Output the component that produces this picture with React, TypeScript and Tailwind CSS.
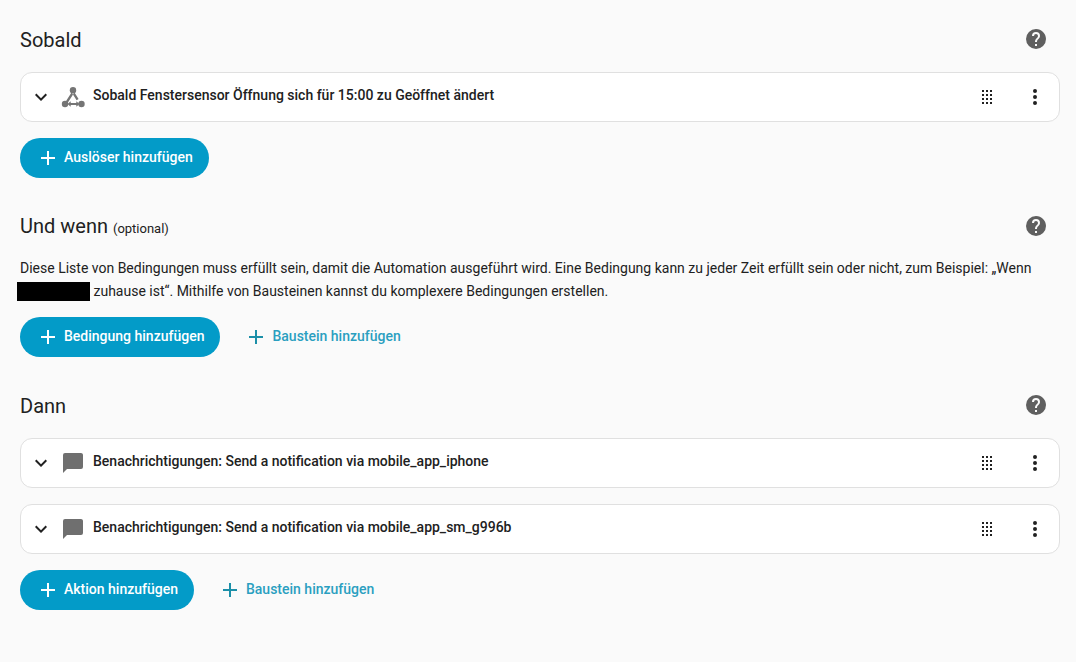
const F = "font-['Roboto',sans-serif]";

function Plus({ className }: { className: string }) {
  return (
    <svg viewBox="0 0 24 24" className={className} fill="currentColor">
      <path d="M19 13h-6v6h-2v-6H5v-2h6V5h2v6h6v2z" />
    </svg>
  );
}

function Help() {
  return (
    <svg viewBox="0 0 24 24" className="w-6 h-6 text-[#5f5f5f]" fill="currentColor">
      <path d="M15.07,11.25L14.17,12.17C13.45,12.89 13,13.5 13,15H11V14.5C11,13.39 11.45,12.39 12.17,11.67L13.41,10.41C13.78,10.05 14,9.55 14,9C14,7.89 13.1,7 12,7A2,2 0 0,0 10,9H8A4,4 0 0,1 12,5A4,4 0 0,1 16,9C16,9.88 15.64,10.67 15.07,11.25M13,19H11V17H13M12,2A10,10 0 0,0 2,12A10,10 0 0,0 12,22A10,10 0 0,0 22,12C22,6.47 17.5,2 12,2Z" />
    </svg>
  );
}

function Trigger() {
  return (
    <svg viewBox="0 0 24 24" className="w-6 h-6 text-[#757575]" fill="currentColor">
      <circle cx="12" cy="5.2" r="3.2" />
      <circle cx="4" cy="19" r="3.2" />
      <circle cx="20.5" cy="19" r="3.2" />
      <path d="M11 6.8l2 1.2-7.2 11.2-2-1.2zM13 6.8l-2 1.2 4.6 7.2 2-1.2z" />
      <path d="M6.5 19l3.2-2.8v1.9h5.6v-1.9l3.2 2.8-3.2 2.8v-1.9H9.7v1.9z" />
    </svg>
  );
}

function Message() {
  return (
    <svg viewBox="0 0 24 24" className="w-6 h-6 text-[#6f6f6f]" fill="currentColor">
      <path d="M20,2H4A2,2 0 0,0 2,4V22L6,18H20A2,2 0 0,0 22,16V4C22,2.89 21.1,2 20,2Z" />
    </svg>
  );
}

function Grip() {
  return (
    <svg viewBox="0 0 24 24" className="w-6 h-6 text-[#212121]" fill="currentColor">
      <path d="M7,19V17H9V19H7M11,19V17H13V19H11M15,19V17H17V19H15M7,15V13H9V15H7M11,15V13H13V15H11M15,15V13H17V15H15M7,11V9H9V11H7M11,11V9H13V11H11M15,11V9H17V11H15M7,7V5H9V7H7M11,7V5H13V7H11M15,7V5H17V7H15Z" />
    </svg>
  );
}

function Row({ icon, text }: { icon: React.ReactNode; text: string }) {
  return (
    <div className="h-[50px] rounded-xl border border-[#e0e0e0] bg-white flex items-center pl-2 pr-[12px]">
      <svg viewBox="0 0 24 24" className="w-6 h-6 text-[#212121]" fill="currentColor">
        <path d="M7.41,8.58L12,13.17L16.59,8.58L18,10L12,16L6,10L7.41,8.58Z" />
      </svg>
      <div className="ml-[8px]">{icon}</div>
      <div className="ml-[8px] flex-1 pb-1 text-[14px] font-medium text-[#212121]">{text}</div>
      <Grip />
      <svg viewBox="0 0 24 24" className="ml-6 w-6 h-6 text-[#212121]" fill="currentColor">
        <path d="M12,16A2,2 0 0,1 14,18A2,2 0 0,1 12,20A2,2 0 0,1 10,18A2,2 0 0,1 12,16M12,10A2,2 0 0,1 14,12A2,2 0 0,1 12,14A2,2 0 0,1 10,12A2,2 0 0,1 12,10M12,4A2,2 0 0,1 14,6A2,2 0 0,1 12,8A2,2 0 0,1 10,6A2,2 0 0,1 12,4Z" />
      </svg>
    </div>
  );
}

function Primary({ label }: { label: string }) {
  return (
    <div className="h-10 rounded-full bg-[#039bc8] text-white flex items-center pl-4 pr-4 text-[14px] font-medium">
      <Plus className="w-6 h-6 mr-1" />
      <span className="pb-[2px]">{label}</span>
    </div>
  );
}

function Secondary() {
  return (
    <div className="h-10 flex items-center text-[#2a9fc0] text-[14px] font-medium ml-[12px] px-3">
      <Plus className="w-6 h-6 mr-1 text-[#1b8fa8]" />
      <span className="pb-[2px]">Baustein hinzufügen</span>
    </div>
  );
}

function Heading({ children, low }: { children: React.ReactNode; low?: boolean }) {
  return (
    <div className="flex items-center justify-between h-6 pr-[12px]">
      <div className={low ? "pt-[2px] text-[20px] text-[#212121]" : "text-[20px] text-[#212121]"}>{children}</div>
      <Help />
    </div>
  );
}

export default function App() {
  return (
    <div className={`${F} w-[1076px] h-[662px] overflow-hidden bg-[#fafafa] pl-5 pr-4 pt-[27px]`}>
      <Heading low>Sobald</Heading>
      <div className="mt-[21px]">
        <Row icon={<Trigger />} text="Sobald Fenstersensor Öffnung sich für 15:00 zu Geöffnet ändert" />
      </div>
      <div className="mt-4 flex">
        <Primary label="Auslöser hinzufügen" />
      </div>

      <div className="mt-[36px]">
        <Heading>
          Und wenn <span className="text-[13px]">(optional)</span>
        </Heading>
      </div>
      <p className="mt-[19px] text-[14px] leading-[23px] text-[#212121]">
        Diese Liste von Bedingungen muss erfüllt sein, damit die Automation ausgeführt wird. Eine Bedingung kann zu jeder Zeit erfüllt sein oder nicht, zum Beispiel: „Wenn{" "}
        <span className="inline-block bg-black w-[73px] h-[19px] align-[-5px] -ml-[3px]" /> zuhause ist“. Mithilfe von Bausteinen kannst du komplexere Bedingungen erstellen.
      </p>
      <div className="mt-[14px] flex">
        <Primary label="Bedingung hinzufügen" />
        <Secondary />
      </div>

      <div className="mt-[36px]">
        <Heading low>Dann</Heading>
      </div>
      <div className="mt-[21px] flex flex-col gap-4">
        <Row icon={<Message />} text="Benachrichtigungen: Send a notification via mobile_app_iphone" />
        <Row icon={<Message />} text="Benachrichtigungen: Send a notification via mobile_app_sm_g996b" />
      </div>
      <div className="mt-4 flex">
        <Primary label="Aktion hinzufügen" />
        <Secondary />
      </div>
    </div>
  );
}
